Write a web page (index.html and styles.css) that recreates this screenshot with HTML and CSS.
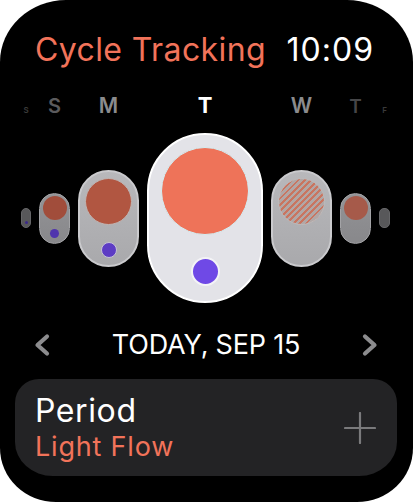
FILE: index.html
```html
<!DOCTYPE html>
<html>
<head>
<meta charset="utf-8">
<link rel="stylesheet" href="styles.css">
</head>
<body>
<div class="screen">
  <header class="header">
    <span class="title">Cycle Tracking</span>
    <span class="time">10:09</span>
  </header>

  <div class="week">
    <span class="day d-xs">S</span>
    <span class="day d-s dim2">S</span>
    <span class="day d-m dim1">M</span>
    <span class="day d-t today">T</span>
    <span class="day d-m dim1">W</span>
    <span class="day d-s2 dim3">T</span>
    <span class="day d-xs">F</span>

    <div class="pill p0"><span class="dot dot0"></span></div>
    <div class="pill p1"><span class="flow flow1"></span><span class="dot dot1"></span></div>
    <div class="pill p2"><span class="flow flow2"></span><span class="dot dot2"></span></div>
    <div class="pill p3"><span class="flow flow3"></span><span class="dot dot3"></span></div>
    <div class="pill p2"><span class="flow flow2 hatched"></span></div>
    <div class="pill p1"><span class="flow flow1 faded"></span></div>
    <div class="pill p0"></div>
  </div>

  <div class="date-row">
    <svg class="chev" width="18" height="24" viewBox="0 0 18 24"><path d="M14 3.5 L4.5 12 L14 20.5" fill="none" stroke="#8c8c8e" stroke-width="4.2" stroke-linecap="round" stroke-linejoin="round"/></svg>
    <span class="date">TODAY, SEP 15</span>
    <svg class="chev" width="18" height="24" viewBox="0 0 18 24"><path d="M4 3.5 L13.5 12 L4 20.5" fill="none" stroke="#8c8c8e" stroke-width="4.2" stroke-linecap="round" stroke-linejoin="round"/></svg>
  </div>

  <div class="card">
    <div class="card-text">
      <div class="card-title">Period</div>
      <div class="card-sub">Light Flow</div>
    </div>
    <svg class="plus" width="32" height="32" viewBox="0 0 32 32"><path d="M16 1 V31 M1 16 H31" stroke="#7a7a7c" stroke-width="2.2" stroke-linecap="round"/></svg>
  </div>
</div>
</body>
</html>
```

FILE: styles.css
```css
* { box-sizing: border-box; }
html, body {
  margin: 0;
  padding: 0;
  background: #ffffff;
}
.screen {
  width: 413px;
  height: 502px;
  background: #000;
  border-radius: 66px 66px 56px 56px / 62px 62px 54px 54px;
  overflow: hidden;
  display: flex;
  flex-direction: column;
  font-family: "Inter", "Roboto", sans-serif;
}
.header {
  display: flex;
  justify-content: space-between;
  align-items: baseline;
  margin-top: 31px;
  height: 38px;
  line-height: 38px;
  padding: 0 39px 0 35px;
  font-size: 32px;
}
.title { color: #f2735a; letter-spacing: 0.4px; }
.time { color: #fff; letter-spacing: 1px; }

.week {
  margin-top: 25px;
  margin-left: 21px;
  display: grid;
  grid-template-columns: 10px 31px 61px 116px 61px 31px 11px;
  grid-template-rows: auto 170px;
  column-gap: 8px;
  row-gap: 17px;
  justify-items: center;
}
.day {
  align-self: baseline;
  line-height: 1;
  font-weight: 600;
}
.d-xs { font-size: 8px; color: #3a3a3a; }
.d-s { font-size: 20px; }
.d-s2 { font-size: 19px; }
.d-m { font-size: 21px; }
.d-t { font-size: 22px; font-weight: 700; }
.today { color: #fff; }
.dim1 { color: #8b8b8d; }
.dim2 { color: #5b5b5d; }
.dim3 { color: #464648; }

.pill {
  align-self: center;
  width: 100%;
  display: flex;
  flex-direction: column;
  align-items: center;
}
.p0 {
  height: 20px;
  border-radius: 5px;
  background: #58585a;
  border: 1px solid #666668;
  justify-content: flex-end;
  padding-bottom: 3px;
}
.p1 {
  height: 51px;
  border-radius: 16px;
  background: linear-gradient(#939396, #88888b);
  border: 1px solid #a3a3a6;
  padding-top: 2px;
  gap: 9px;
}
.p2 {
  height: 97px;
  border-radius: 31px;
  background: linear-gradient(#b8b8bb, #a9a9ac);
  border: 2px solid #cacacd;
  padding-top: 6px;
  gap: 17px;
}
.p3 {
  height: 170px;
  border-radius: 58px;
  background: #e3e3e8;
  border: 2px solid #ffffff;
  padding-top: 12px;
  gap: 22px;
}
.flow, .dot { display: block; border-radius: 50%; flex: none; }
.flow1 { width: 24px; height: 24px; background: #a14d3b; }
.flow1.faded { background: #a65a4a; }
.flow2 { width: 47px; height: 47px; background: #b15641; border: 1px solid #c0b4b2; }
.flow3 { width: 88px; height: 88px; background: #ee7359; border: 1.5px solid #d3eef3; }
.hatched {
  background: repeating-linear-gradient(135deg, #c97560 0 2px, #b1a7a6 2px 4.5px);
  border: 1px solid #bdb9b9;
}
.dot0 { width: 3px; height: 3px; background: #3c2a8a; }
.dot1 { width: 9px; height: 9px; background: #5035ad; }
.dot2 { width: 16px; height: 16px; background: #5d3cc4; border: 1px solid #c7c3d6; }
.dot3 { width: 29px; height: 29px; background: #6f49e6; border: 2px solid #f3f3f6; }

.date-row {
  display: flex;
  justify-content: space-between;
  align-items: center;
  margin-top: 26px;
  height: 32px;
  padding: 0 34px 0 33px;
}
.date {
  color: #fff;
  font-size: 27px;
  line-height: 32px;
  letter-spacing: -0.2px;
}

.card {
  margin: 18px 16px 0 15px;
  height: 97px;
  background: #232325;
  border-radius: 24px 24px 38px 38px / 24px 24px 34px 34px;
  display: flex;
  align-items: center;
  justify-content: space-between;
  padding: 0 21px 0 20px;
}
.card-text { padding-top: 4px; }
.card-title {
  color: #fff;
  font-size: 32px;
  line-height: 34px;
  font-weight: 400;
  letter-spacing: 0.6px;
}
.card-sub {
  color: #f2735a;
  font-size: 27px;
  line-height: 36px;
  margin-top: 1.5px;
  letter-spacing: 0.8px;
}
```
